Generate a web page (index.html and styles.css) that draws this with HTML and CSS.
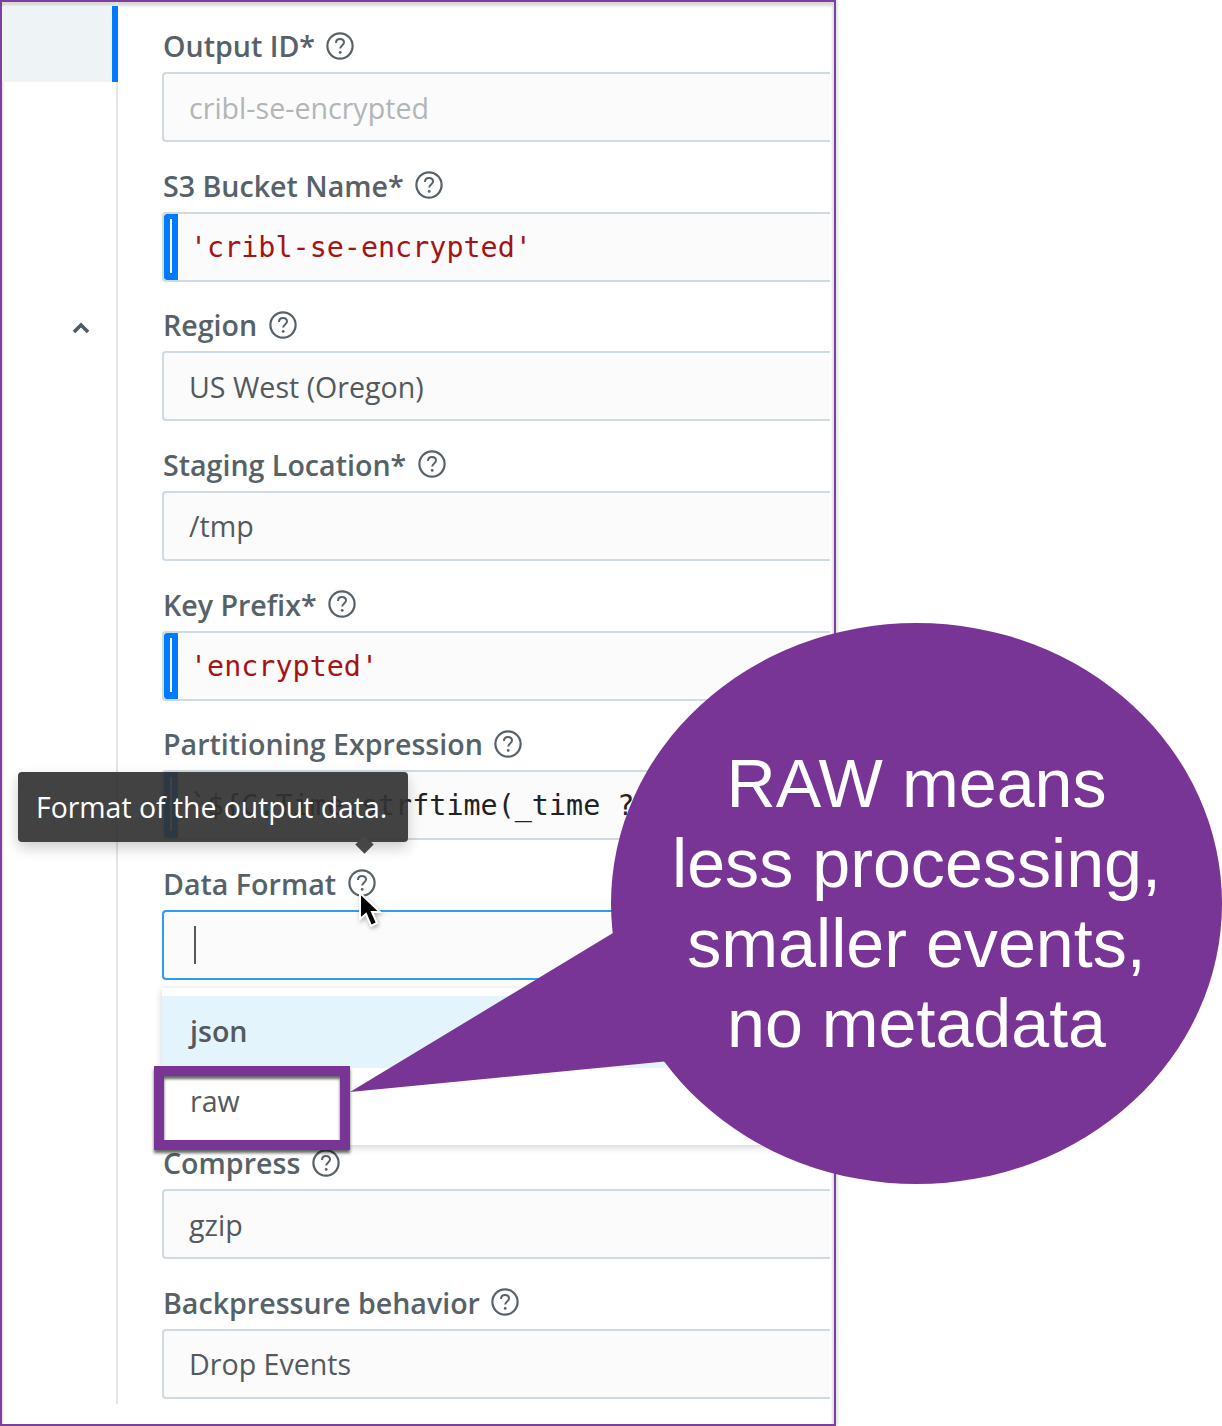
FILE: index.html
```html
<!DOCTYPE html>
<html lang="en">
<head>
    <meta charset="UTF-8">
    <title>Destination settings</title>
    <link rel="stylesheet" href="styles.css">
</head>
<body>

<svg class="hidden-defs" width="0" height="0">
    <symbol id="help" viewBox="0 0 28 28">
        <circle cx="14" cy="14" r="12.6" fill="none" stroke="currentColor" stroke-width="2.2"/>
        <path d="M10 11 C10 8.4 11.8 7 14 7 C16.4 7 18 8.5 18 10.6 C18 13.4 14.2 13.6 14.2 16.6" fill="none" stroke="currentColor" stroke-width="2"/>
        <circle cx="14.2" cy="20.4" r="1.4" fill="currentColor"/>
    </symbol>
</svg>

<div class="frame">
    <aside class="side">
        <div class="side-item"></div>
        <svg class="chevron" width="18" height="12" viewBox="0 0 18 12"><path d="M2 10 L9 3 L16 10" fill="none" stroke="#4f5b62" stroke-width="3.6"/></svg>
    </aside>

    <main class="form">
        <div class="field">
            <div class="label">Output ID* <svg class="help"><use href="#help"/></svg></div>
            <div class="input disabled">cribl-se-encrypted</div>
        </div>
        <div class="field">
            <div class="label">S3 Bucket Name* <svg class="help"><use href="#help"/></svg></div>
            <div class="input code"><span class="js-tab"></span><span class="str">'cribl-se-encrypted'</span></div>
        </div>
        <div class="field">
            <div class="label">Region <svg class="help"><use href="#help"/></svg></div>
            <div class="input">US West (Oregon)</div>
        </div>
        <div class="field">
            <div class="label">Staging Location* <svg class="help"><use href="#help"/></svg></div>
            <div class="input">/tmp</div>
        </div>
        <div class="field">
            <div class="label">Key Prefix* <svg class="help"><use href="#help"/></svg></div>
            <div class="input code"><span class="js-tab"></span><span class="str">'encrypted'</span></div>
        </div>
        <div class="field">
            <div class="label">Partitioning Expression <svg class="help"><use href="#help"/></svg></div>
            <div class="input code"><span class="js-tab"></span><span>`${C.Time.strftime(_time ?</span></div>
        </div>
        <div class="field field-open">
            <div class="label">Data Format <svg class="help"><use href="#help"/></svg></div>
            <div class="input focused"><span class="caret"></span></div>
            <div class="menu">
                <div class="menu-item active">json</div>
                <div class="menu-item raw">raw</div>
            </div>
        </div>
        <div class="field">
            <div class="label">Compress <svg class="help"><use href="#help"/></svg></div>
            <div class="input">gzip</div>
        </div>
        <div class="field">
            <div class="label">Backpressure behavior <svg class="help"><use href="#help"/></svg></div>
            <div class="input">Drop Events</div>
        </div>
    </main>

    <div class="tooltip">Format of the output data.</div>
    <svg class="pointer" width="28" height="38" viewBox="0 0 28 38">
        <path d="M4 1 L4 27 L10 22 L15 34 L21 31 L16 20 L24 20 Z" fill="#000" stroke="#fff" stroke-width="2"/>
    </svg>
    <div class="raw-box"></div>
</div>

<div class="callout">
    <svg class="callout-shape" width="872" height="561" viewBox="0 0 872 561">
        <ellipse cx="566.500" cy="280.500" rx="305.500" ry="280.500" fill="#783596"/>
        <path d="M0 469 L263 310 L340 310 L350 435 Z" fill="#783596"/>
    </svg>
    <div class="callout-text">RAW means<br>less processing,<br>smaller events,<br>no metadata</div>
</div>

</body>
</html>
```

FILE: styles.css
```css
/* General styling */
html, body {
    margin: 0;
    height: 1426px;
    overflow: hidden;
    background: #ffffff;
}

body {
    position: relative;
    font-family: "Open Sans", sans-serif;
    color: #53595d;
}

.hidden-defs {
    position: absolute;
}

/* Screenshot frame */
.frame {
    position: relative;
    box-sizing: border-box;
    width: 836px;
    height: 1426px;
    display: flex;
    border: 2px solid #7d3f9e;
    box-shadow: inset 3px 6px 3px -2px #d8d8d8, inset -3px 0 2px -1px #e2e2e2, 2px 0 2px #e4e4e4;
    overflow: hidden;
}

/* Left column */
.side {
    box-sizing: border-box;
    width: 116px;
    height: 1402px;
    flex: none;
    padding-top: 4px;
    border-right: 2px solid #e3e5e6;
}

.side-item {
    height: 76px;
    background: #eef3f6;
    border-right: 6px solid #007bff;
    margin-right: -2px;
}

.chevron {
    display: block;
    margin: 240px 0 0 70px;
}

/* Form */
.form {
    flex: 1;
    padding: 25.500px 4px 0 44px;
}

.field {
    position: relative;
    height: 139.650px;
}

.field-open {
    height: 279.300px;
}

.label {
    display: flex;
    align-items: center;
    height: 36px;
    margin: 0 0 8.500px 1px;
    font-size: 28.600px;
    font-weight: 600;
    color: #566268;
    white-space: pre;
}

.help {
    width: 28px;
    height: 28px;
    margin-left: 4px;
    color: #566268;
}

.input {
    box-sizing: border-box;
    display: flex;
    align-items: center;
    height: 70px;
    padding-left: 25px;
    font-size: 28.600px;
    background: #fbfbfb;
    border: 2px solid #cfdae1;
    border-right: 0;
    border-radius: 4px 0 0 4px;
    white-space: nowrap;
    overflow: hidden;
}

.disabled {
    color: #b2b5b7;
}

.code {
    padding-left: 0;
    font-family: "DejaVu Sans Mono", monospace;
    font-size: 28.400px;
    color: #222222;
}

.str {
    margin-top: 2px;
    color: #a31515;
}

.js-tab {
    box-sizing: border-box;
    flex: none;
    width: 14px;
    height: 66px;
    margin-right: 12px;
    background: #ffffff;
    border: solid #007bff;
    border-width: 5px 6px 7px 6px;
    border-radius: 3px 0 0 3px;
}

.focused {
    border: 2px solid #2f9bf5;
    border-right: 0;
}

.caret {
    width: 2px;
    height: 38px;
    margin-left: 5px;
    background: #53595d;
}

/* Dropdown menu */
.menu {
    position: absolute;
    left: 0;
    right: 0;
    top: 123px;
    height: 157px;
    padding-top: 8px;
    box-sizing: border-box;
    background: #ffffff;
    box-shadow: 0 2px 8px rgba(0, 0, 0, 0.18);
}

.menu-item {
    height: 72px;
    padding-left: 28px;
    line-height: 70px;
    font-size: 28.600px;
}

.menu-item.active {
    background: #e3f4fd;
    font-weight: 600;
}

.menu-item.raw {
    line-height: 66px;
}

/* Tooltip */
.tooltip {
    position: absolute;
    left: 16px;
    top: 770px;
    box-sizing: border-box;
    width: 390px;
    height: 70px;
    padding-left: 18px;
    line-height: 70px;
    font-size: 28.400px;
    color: #ffffff;
    background: rgba(50, 50, 50, 0.92);
    border-radius: 4px;
    box-shadow: 0 6px 14px rgba(0, 0, 0, 0.2);
    white-space: nowrap;
}

.tooltip::after {
    content: "";
    position: absolute;
    left: 339.500px;
    top: 66px;
    width: 13px;
    height: 13px;
    background: #464646;
    transform: rotate(45deg);
}

.pointer {
    position: absolute;
    left: 354px;
    top: 890px;
    filter: drop-shadow(1px 2px 2px rgba(0, 0, 0, 0.3));
}

/* Annotations */
.raw-box {
    position: absolute;
    left: 152px;
    top: 1064px;
    box-sizing: border-box;
    width: 196px;
    height: 84px;
    border: 10px solid #783596;
    box-shadow: 0 3px 3px rgba(0, 0, 0, 0.6), inset 0 3px 3px rgba(0, 0, 0, 0.6);
}

.callout {
    position: absolute;
    left: 350px;
    top: 623px;
    width: 872px;
    height: 561px;
}

.callout-shape {
    display: block;
}

.callout-text {
    position: absolute;
    left: 261px;
    right: 0;
    top: 120px;
    font-family: "Liberation Sans", Arial, sans-serif;
    font-size: 68.200px;
    line-height: 80px;
    color: #ffffff;
    text-align: center;
    white-space: nowrap;
}
```
